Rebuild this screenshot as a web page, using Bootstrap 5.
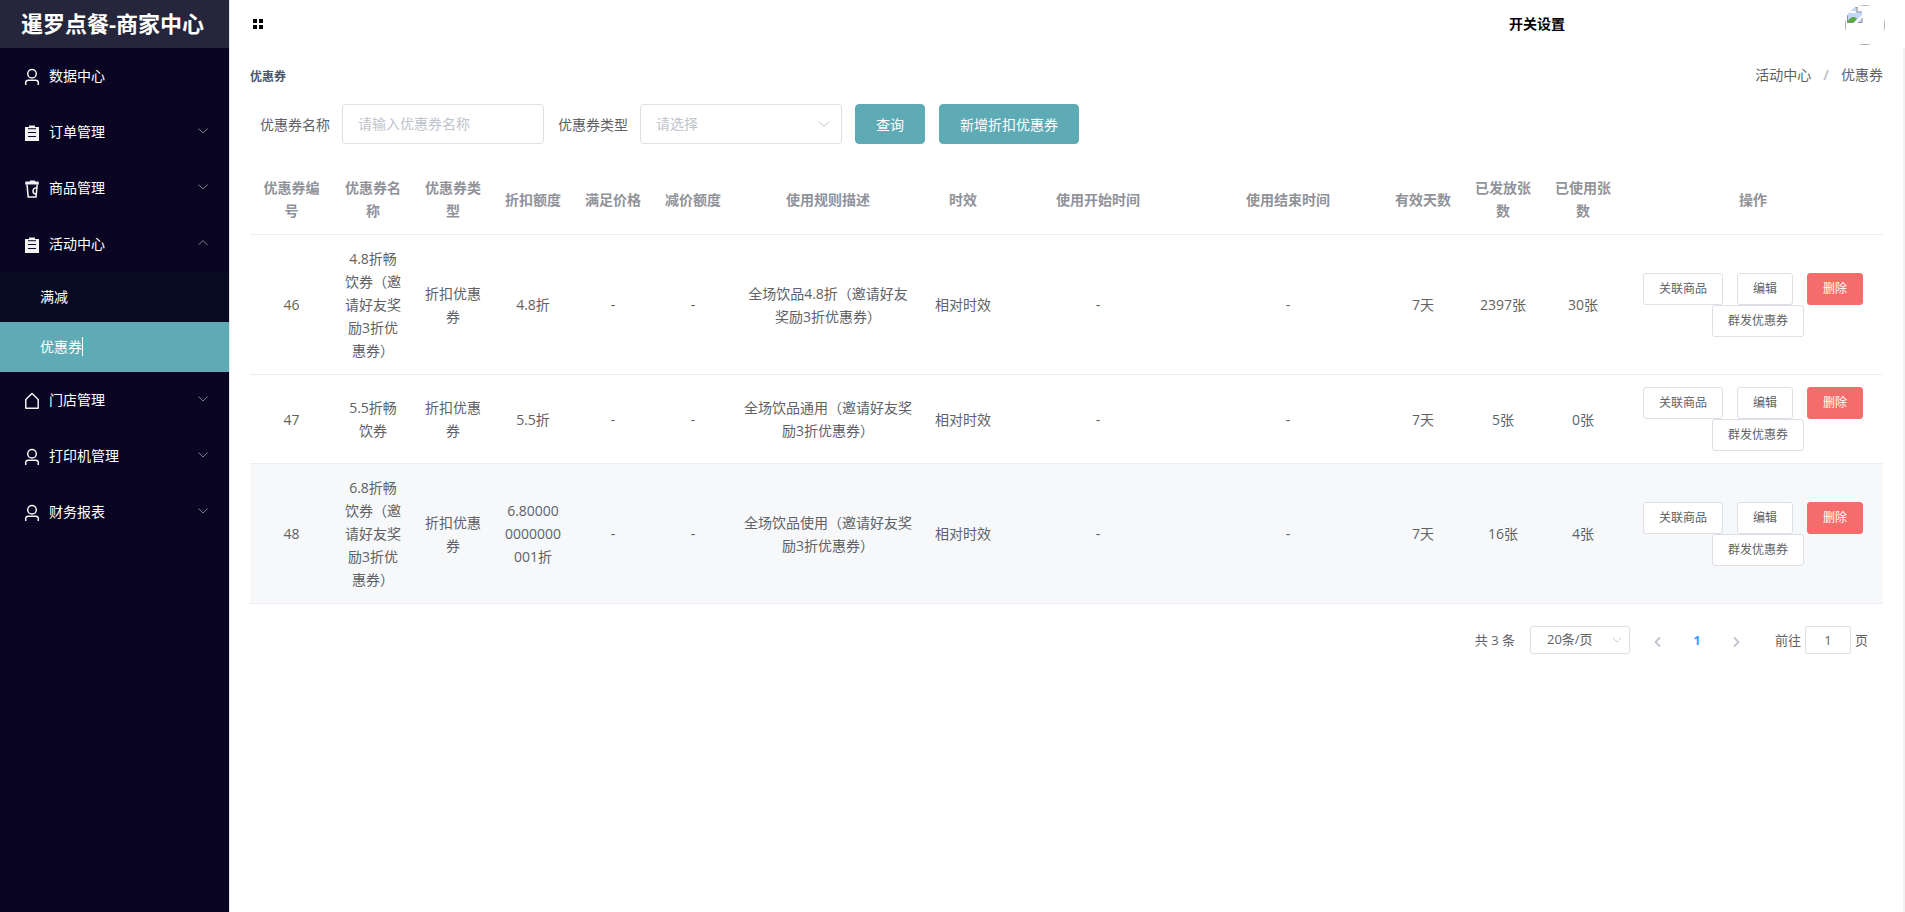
<!DOCTYPE html>
<html lang="zh-CN">
<head>
<meta charset="utf-8">
<meta name="viewport" content="width=device-width, initial-scale=1">
<title>暹罗点餐-商家中心</title>
<link href="https://cdn.jsdelivr.net/npm/bootstrap@5.3.0/dist/css/bootstrap.min.css" rel="stylesheet">
<style>
  :root { --teal: #5fabb5; --line: #ebeef5; --ctl: #dcdfe6; --ink: #606266; --muted: #c0c4cc; }
  body { font-family: "Open Sans", "Noto Sans CJK SC", sans-serif; font-size: 14px; line-height: 23px; color: var(--ink); }
  a { color: inherit; text-decoration: none; }

  .side { width: 230px; background: #090522; color: #fff; border-right: 1px solid #e6e6e6; }
  .brand { height: 48px; padding: 0 4px 2px 0; background: #25263b; font-size: 22px; font-weight: 700; }
  .menu-link { height: 56px; padding: 0 20px 2px 24px; }
  .menu-link .ico { width: 16px; height: 18px; margin: 4px 9px 0 0; color: #f2f2f2; }
  .menu-link .arrow { width: 12px; height: 12px; color: #7d7f8a; }
  .sub { background: #080a22; }
  .sub-link { height: 50px; padding: 0 0 2px 40px; }
  .sub-link.active { background: var(--teal); }
  .sub-link.active::after { content: ""; width: 1px; height: 19px; background: #fff; }

  .topbar { height: 48px; display: grid; grid-template-columns: 1fr 396px; color: #000; padding-left: 22px; }
  .topbar .toggle { width: 12px; height: 12px; }
  .topbar .end { padding: 2px 20px 0 0; }
  .topbar .end a { padding-bottom: 4px; }
  .page { padding: 16px 20px; border-right: 2px solid #f1f1f1; }
  .page-title { font-size: 12px; font-weight: 700; color: #475669; line-height: 26px; }
  .crumbs { --bs-breadcrumb-item-padding-x: 12px; --bs-breadcrumb-divider-color: var(--muted); line-height: 22px; }
  .crumbs .breadcrumb-item.active { color: var(--ink); }
  .crumbs .breadcrumb-item + .breadcrumb-item::before { font-weight: 700; }

  .filters { padding: 14px 10px 0; }
  .filters label { margin-right: 12px; }
  .ctl, .ctl:focus { border: 1px solid var(--ctl); border-radius: 4px; font-size: 14px; color: var(--ink); box-shadow: none; }
  .ctl::placeholder { color: var(--muted); }
  .filters .ctl { width: 202px; height: 40px; padding: 0 15px 1px; margin-right: 14px; }
  .filters select.ctl { color: var(--muted); margin-right: 13px; }
  select.ctl { background-image: url("data:image/svg+xml,%3Csvg xmlns='http://www.w3.org/2000/svg' viewBox='0 0 12 12'%3E%3Cpath d='M1 3.5 6 8.500l5-5' fill='none' stroke='%23c0c4cc'/%3E%3C/svg%3E"); background-position: right 11px center; background-size: 12px 12px; }
  .btn-main { --bs-btn-color: #fff; --bs-btn-bg: var(--teal); --bs-btn-border-color: var(--teal); --bs-btn-hover-color: #fff; --bs-btn-hover-bg: #7fbcc4; --bs-btn-hover-border-color: #7fbcc4; --bs-btn-padding-x: 20px; --bs-btn-padding-y: 0; --bs-btn-font-size: 14px; --bs-btn-border-radius: 4px; height: 40px; }
  .btn-main + .btn-main { margin-left: 14px; }

  .coupons { table-layout: fixed; margin: 20px 0 0; text-align: center; vertical-align: middle; --bs-table-color: var(--ink); --bs-table-bg: transparent; color: var(--ink); }
  .coupons > :not(caption) > * > * { padding: 12px 10px; border-bottom: 1px solid var(--line); color: var(--ink); }
  .coupons > thead > tr > th { color: #909399; font-weight: 700; vertical-align: middle; }
  .coupons > tbody > tr.on > td { background: #f6f8fa; }
  .coupons > tbody > tr > td.ops { padding-left: 9px; padding-right: 9px; }
  .c-id { width: 83px; } .c-s { width: 80px; } .c-l { width: 190px; } .c-op { width: 260px; }
  .ops .bar { gap: 0 14px; }
  .btn-mini { --bs-btn-font-size: 12px; --bs-btn-padding-x: 15px; --bs-btn-padding-y: 0; --bs-btn-border-radius: 3px; height: 32px; }
  .btn-plain { --bs-btn-color: var(--ink); --bs-btn-bg: #fff; --bs-btn-border-color: var(--ctl); --bs-btn-hover-color: var(--teal); --bs-btn-hover-bg: #fff; --bs-btn-hover-border-color: var(--teal); }
  .btn-del { --bs-btn-color: #fff; --bs-btn-bg: #f56c6c; --bs-btn-border-color: #f56c6c; --bs-btn-hover-color: #fff; --bs-btn-hover-bg: #f78989; --bs-btn-hover-border-color: #f78989; }
  .ops .send { margin-left: 10px; }

  .pager { padding: 22px 15px 0; font-size: 13px; line-height: 28px; }
  .pager .ctl { height: 28px; font-size: 13px; padding: 0; border-radius: 3px; }
  .pager .size { width: 100px; margin: 0 12px 0 15px; padding-left: 16px; background-position: right 7px center; background-size: 10px 10px; }
  .pager .goto { width: 46px; margin: 0 4px; }
  .pager label { margin-left: 23px; }
  .pager .step { width: 32px; height: 28px; color: var(--muted); font-size: 13px; line-height: 28px; }
  .pager .num { width: 46px; color: #409eff; font-weight: 700; }
</style>
</head>
<body>
<svg class="d-none" xmlns="http://www.w3.org/2000/svg">
  <symbol id="user" viewBox="0 0 16 18"><g fill="none" stroke="currentColor" stroke-width="1.500"><circle cx="8" cy="5.800" r="4.300"/><path d="M1.700 17v-2.200q0-2.600 2.600-2.600h7.400q2.600 0 2.600 2.600V17"/></g></symbol>
  <symbol id="order" viewBox="0 0 16 18"><path fill="currentColor" fill-rule="evenodd" d="M1 3h4V1.500h6V3h4v14H1zM4 5.200h8V4.200H4zM4 8v1h8V8zm0 4v1h8v-1z"/></symbol>
  <symbol id="goods" viewBox="0 0 16 18"><path fill="currentColor" d="M1.500 1.500H6V.500h5v1h3.500l.5 3H1z"/><path d="M3 4.500 4.200 17h7.800L13.200 4.500" fill="none" stroke="currentColor" stroke-width="1.600"/><path d="M12.500 7.700q-3.500.3-3.500 3.300t3 3" fill="none" stroke="currentColor" stroke-width="1.500"/></symbol>
  <symbol id="home" viewBox="0 0 16 18"><path d="M1.800 16.200V7.500L8 1.500l6.200 6v8.700z" fill="none" stroke="currentColor" stroke-width="1.500" stroke-linejoin="round"/></symbol>
  <symbol id="down" viewBox="0 0 12 12"><path d="m1.500 3.500 4.500 4.500 4.500-4.500" fill="none" stroke="currentColor"/></symbol>
  <symbol id="up" viewBox="0 0 12 12"><path d="m1.500 8 4.500-4.500L10.500 8" fill="none" stroke="currentColor"/></symbol>
  <symbol id="prev" viewBox="0 0 12 12"><path d="M8 1.500 3.500 6 8 10.500" fill="none" stroke="currentColor" stroke-width="1.800"/></symbol>
  <symbol id="next" viewBox="0 0 12 12"><path d="M4 1.500 8.500 6 4 10.500" fill="none" stroke="currentColor" stroke-width="1.800"/></symbol>
</svg>

<div class="d-flex min-vh-100">
  <aside class="side flex-shrink-0">
    <div class="brand d-flex align-items-center justify-content-center">暹罗点餐-商家中心</div>
    <nav>
      <a href="#" class="menu-link d-flex align-items-center"><svg class="ico"><use href="#user"/></svg>数据中心</a>
      <a href="#" class="menu-link d-flex align-items-center"><svg class="ico"><use href="#order"/></svg>订单管理<svg class="arrow ms-auto"><use href="#down"/></svg></a>
      <a href="#" class="menu-link d-flex align-items-center"><svg class="ico"><use href="#goods"/></svg>商品管理<svg class="arrow ms-auto"><use href="#down"/></svg></a>
      <a href="#" class="menu-link d-flex align-items-center"><svg class="ico"><use href="#order"/></svg>活动中心<svg class="arrow ms-auto"><use href="#up"/></svg></a>
      <div class="sub">
        <a href="#" class="sub-link d-flex align-items-center">满减</a>
        <a href="#" class="sub-link active d-flex align-items-center">优惠券</a>
      </div>
      <a href="#" class="menu-link d-flex align-items-center"><svg class="ico"><use href="#home"/></svg>门店管理<svg class="arrow ms-auto"><use href="#down"/></svg></a>
      <a href="#" class="menu-link d-flex align-items-center"><svg class="ico"><use href="#user"/></svg>打印机管理<svg class="arrow ms-auto"><use href="#down"/></svg></a>
      <a href="#" class="menu-link d-flex align-items-center"><svg class="ico"><use href="#user"/></svg>财务报表<svg class="arrow ms-auto"><use href="#down"/></svg></a>
    </nav>
  </aside>

  <div class="flex-grow-1 d-flex flex-column">
    <header class="topbar align-items-center">
      <button type="button" class="btn p-0 border-0 d-flex toggle" aria-label="折叠菜单"><svg width="12" height="12" viewBox="0 0 12 12"><path d="M1 1h4v4H1zM7 1h4v4H7zM1 7h4v4H1zM7 7h4v4H7z"/></svg></button>
      <div class="end d-flex align-items-center justify-content-between">
        <a href="#" class="fw-bold">开关设置</a>
        <svg width="40" height="40" viewBox="0 0 40 40" role="img" aria-label="头像">
          <clipPath id="round"><circle cx="20" cy="20" r="20"/></clipPath>
          <g clip-path="url(#round)">
            <path d="M.5.5h39v39H.5z" fill="none" stroke="#a8a8a8"/>
            <path d="M2 2h10l5 5v11H2z" fill="#c3d5f8"/>
            <path d="M12 2v5h5" fill="#fff" stroke="#8c8c8c"/>
            <path d="M5 7q1-2 3-1 3-1 3 2H5z" fill="#fff"/>
            <path d="M2 18q2-5 6-6 3 0 4 2l-4 4z" fill="#55a83a"/>
            <path d="M2.500 18V2.500H12M2 17.500h6M13 17.500h4V13" fill="none" stroke="#8c8c8c"/>
            <path d="m9 18 8-8v3l-5 5z" fill="#fff"/>
          </g>
        </svg>
      </div>
    </header>

    <main class="page flex-grow-1">
      <div class="d-flex justify-content-between align-items-start">
        <h1 class="page-title m-0">优惠券</h1>
        <nav aria-label="breadcrumb">
          <ol class="breadcrumb crumbs m-0">
            <li class="breadcrumb-item"><a href="#">活动中心</a></li>
            <li class="breadcrumb-item active" aria-current="page">优惠券</li>
          </ol>
        </nav>
      </div>

      <form class="filters d-flex flex-wrap align-items-center">
        <label for="name">优惠券名称</label>
        <input id="name" type="text" class="form-control ctl" placeholder="请输入优惠券名称">
        <label for="kind">优惠券类型</label>
        <select id="kind" class="form-select ctl"><option>请选择</option></select>
        <button type="button" class="btn btn-main">查询</button>
        <button type="button" class="btn btn-main">新增折扣优惠券</button>
      </form>

      <table class="table coupons">
        <colgroup><col class="c-id"><col class="c-s" span="5"><col class="c-l"><col class="c-s"><col class="c-l" span="2"><col class="c-s" span="3"><col class="c-op"></colgroup>
        <thead>
          <tr><th>优惠券编号</th><th>优惠券名称</th><th>优惠券类型</th><th>折扣额度</th><th>满足价格</th><th>减价额度</th><th>使用规则描述</th><th>时效</th><th>使用开始时间</th><th>使用结束时间</th><th>有效天数</th><th>已发放张数</th><th>已使用张数</th><th>操作</th></tr>
        </thead>
        <tbody>
          <tr>
            <td>46</td><td>4.8折畅饮券（邀请好友奖励3折优惠券）</td><td>折扣优惠券</td><td>4.8折</td><td>-</td><td>-</td><td>全场饮品4.8折（邀请好友奖励3折优惠券）</td><td>相对时效</td><td>-</td><td>-</td><td>7天</td><td>2397张</td><td>30张</td>
            <td class="ops"><div class="bar d-flex flex-wrap justify-content-center"><button type="button" class="btn btn-mini btn-plain">关联商品</button><button type="button" class="btn btn-mini btn-plain">编辑</button><button type="button" class="btn btn-mini btn-del">删除</button><button type="button" class="btn btn-mini btn-plain send">群发优惠券</button></div></td>
          </tr>
          <tr>
            <td>47</td><td>5.5折畅饮券</td><td>折扣优惠券</td><td>5.5折</td><td>-</td><td>-</td><td>全场饮品通用（邀请好友奖励3折优惠券）</td><td>相对时效</td><td>-</td><td>-</td><td>7天</td><td>5张</td><td>0张</td>
            <td class="ops"><div class="bar d-flex flex-wrap justify-content-center"><button type="button" class="btn btn-mini btn-plain">关联商品</button><button type="button" class="btn btn-mini btn-plain">编辑</button><button type="button" class="btn btn-mini btn-del">删除</button><button type="button" class="btn btn-mini btn-plain send">群发优惠券</button></div></td>
          </tr>
          <tr class="on">
            <td>48</td><td>6.8折畅饮券（邀请好友奖励3折优惠券）</td><td>折扣优惠券</td><td>6.80000<br>0000000<br>001折</td><td>-</td><td>-</td><td>全场饮品使用（邀请好友奖励3折优惠券）</td><td>相对时效</td><td>-</td><td>-</td><td>7天</td><td>16张</td><td>4张</td>
            <td class="ops"><div class="bar d-flex flex-wrap justify-content-center"><button type="button" class="btn btn-mini btn-plain">关联商品</button><button type="button" class="btn btn-mini btn-plain">编辑</button><button type="button" class="btn btn-mini btn-del">删除</button><button type="button" class="btn btn-mini btn-plain send">群发优惠券</button></div></td>
          </tr>
        </tbody>
      </table>

      <div class="pager d-flex justify-content-end align-items-center">
        <span>共 3 条</span>
        <select class="form-select ctl size" aria-label="每页条数"><option>20条/页</option></select>
        <button type="button" class="btn step p-0 border-0" aria-label="上一页"><svg width="12" height="12"><use href="#prev"/></svg></button>
        <button type="button" class="btn step num p-0 border-0">1</button>
        <button type="button" class="btn step p-0 border-0" aria-label="下一页"><svg width="12" height="12"><use href="#next"/></svg></button>
        <label for="goto">前往</label>
        <input id="goto" type="text" class="form-control ctl goto text-center" value="1">
        <span>页</span>
      </div>
    </main>
  </div>
</div>
<script src="https://cdn.jsdelivr.net/npm/bootstrap@5.3.0/dist/js/bootstrap.bundle.min.js"></script>
</body>
</html>
